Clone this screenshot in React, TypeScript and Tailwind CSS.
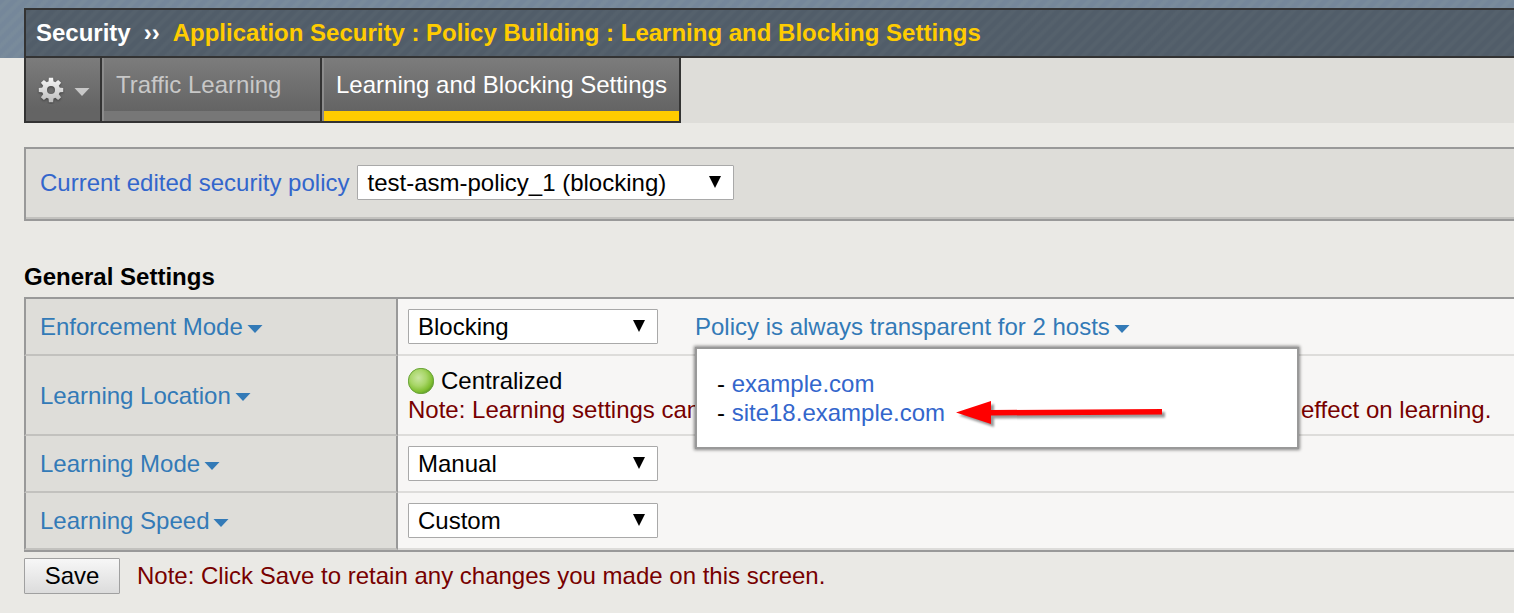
import React, { useState } from "react";

function Caret() {
  return (
    <svg className="mt-1 h-2 w-4 shrink-0" viewBox="0 0 16 8" aria-hidden="true">
      <path d="M0.5 0H15.5L8 8Z" fill="currentColor" />
    </svg>
  );
}

function SelectBox({ id, label, value, className }: { id: string; label?: string; value: string; className: string }) {
  return (
    <div className={`relative ${className}`}>
      <select
        id={id}
        aria-label={label}
        defaultValue={value}
        className="block h-[35px] w-full appearance-none rounded-[1px] border border-[#a9a9a9] bg-white pr-9 pl-[9px] text-2xl leading-8 text-black"
      >
        <option>{value}</option>
      </select>
      <svg className="pointer-events-none absolute top-[11px] right-[13px] h-3 w-3" viewBox="0 0 12 12" aria-hidden="true">
        <path d="M0 0H12L6 12Z" fill="#000" />
      </svg>
    </div>
  );
}

function Gear() {
  const angles = [0, 45, 90, 135, 180, 225, 270, 315];
  return (
    <svg className="h-7 w-7" viewBox="0 0 28 28" aria-hidden="true">
      <defs>
        <linearGradient id="gear" x1="0" y1="2" x2="0" y2="26" gradientUnits="userSpaceOnUse">
          <stop offset="0" stopColor="#f6f6f6" />
          <stop offset="1" stopColor="#bdbdbd" />
        </linearGradient>
        <mask id="gear-hole">
          <rect width="28" height="28" fill="#fff" />
          <circle cx="14" cy="14" r="4" fill="#000" />
        </mask>
      </defs>
      <g className="drop-shadow-[0_1px_1px_rgba(0,0,0,0.4)]">
        <g mask="url(#gear-hole)" fill="url(#gear)">
          <circle cx="14" cy="14" r="9" />
          {angles.map((a) => {
            const t = (a * Math.PI) / 180;
            const point = (x: number, y: number) =>
              `${14 + x * Math.cos(t) - y * Math.sin(t)},${14 + x * Math.sin(t) + y * Math.cos(t)}`;
            return (
              <polygon
                key={a}
                points={[point(-2.6, -7), point(-2.1, -12.2), point(2.1, -12.2), point(2.6, -7)].join(" ")}
              />
            );
          })}
        </g>
      </g>
    </svg>
  );
}

function Row({ label, children }: { label: string; children: React.ReactNode }) {
  return (
    <tr>
      <th
        scope="row"
        className="w-[374px] border-r-2 border-b-2 border-l-2 border-r-[#999] border-b-[#c2c1be] border-l-[#999] bg-[#deddd9] pl-3.5 text-left font-normal"
      >
        <button type="button" className="flex items-center gap-1 text-[#337ab7]">
          {label}
          <Caret />
        </button>
      </th>
      <td className="h-[57px] border-b-2 border-b-[#dddcda] bg-[#f7f6f5] pl-2.5">{children}</td>
    </tr>
  );
}

export default function App() {
  const [open, setOpen] = useState(true);
  return (
    <div className="min-h-screen overflow-x-hidden bg-[#eae9e5] font-['Liberation_Sans',Arial,sans-serif] text-2xl leading-[29px] text-black">
      <header>
        <div className="bg-[repeating-linear-gradient(135deg,#75879a_0px,#75879a_3px,#798b9b_5px,#798b9b_7px,#75879a_9px)] pt-2 pl-6">
          <div className="flex h-[50px] items-center border-2 border-r-0 border-[#333] bg-[repeating-linear-gradient(135deg,#515d69_0px,#515d69_3px,#55616c_5px,#55616c_7px,#515d69_9px)] pb-0.5 pl-2.5 font-bold whitespace-nowrap">
            <span className="text-white">Security</span>
            <span className="ml-[13px] text-white">››</span>
            <h1 className="ml-[13px] text-[#fc0]">Application Security : Policy Building : Learning and Blocking Settings</h1>
          </div>
        </div>
        <div className="pl-6">
          <nav className="flex h-[65px] bg-[#deddd9]">
            <div className="flex border-r-2 border-b-2 border-l-2 border-[#333] whitespace-nowrap">
              <button
                type="button"
                aria-label="Options"
                className="flex w-[74px] items-center bg-linear-to-b from-[#7c7c7c] to-[#646464] to-80% pl-[11px] text-[#c8c8c8]"
              >
                <Gear />
                <svg className="mt-1 ml-[9px] h-2 w-4" viewBox="0 0 16 8" aria-hidden="true">
                  <path d="M0.5 0H15.5L8 8Z" fill="currentColor" />
                </svg>
              </button>
              <a href="#traffic" className="flex w-[220px] border-l-2 border-[#333] text-[#c8c8c8]">
                <span className="w-0.5 bg-[#8c8c8c]" />
                <span className="flex-1 border-b-[10px] border-[#777] bg-linear-to-b from-[#7c7c7c] to-[#646464] pt-3 pl-3">
                  Traffic Learning
                </span>
              </a>
              <a href="#settings" aria-current="page" className="flex border-l-2 border-[#333] text-white">
                <span className="w-0.5 bg-[#8c8c8c]" />
                <span className="flex-1 border-b-[10px] border-[#fc0] bg-linear-to-b from-[#7c7c7c] to-[#646464] px-3 pt-3">
                  Learning and Blocking Settings
                </span>
              </a>
            </div>
          </nav>
        </div>
      </header>

      <main className="pt-6 pl-6">
        <section className="border-t-2 border-b-2 border-l-2 border-[#999]">
          <div className="flex items-center gap-2 border-b-2 border-[#c2c1be] bg-[#deddd9] pt-4 pb-[17px] pl-3.5">
            <label htmlFor="policy" className="whitespace-nowrap text-[#36c]">
              Current edited security policy
            </label>
            <SelectBox id="policy" value="test-asm-policy_1 (blocking)" className="w-[377px]" />
          </div>
        </section>

        <h2 className="mt-[41px] mb-1.5 font-bold">General Settings</h2>

        <table className="w-full border-separate border-spacing-0 border-t-2 border-b-2 border-[#999]">
          <tbody>
            <Row label="Enforcement Mode">
              <div className="flex items-center gap-[37px]">
                <SelectBox id="enforcement" label="Enforcement Mode" value="Blocking" className="w-[250px]" />
                <div className="relative">
                  <button
                    type="button"
                    aria-expanded={open}
                    onClick={() => setOpen(!open)}
                    className="flex items-center gap-1 whitespace-nowrap text-[#337ab7]"
                  >
                    Policy is always transparent for 2 hosts
                    <Caret />
                  </button>
                  {open && (
                    <div className="absolute top-[35px] left-0 z-10 w-[604px] border-2 border-[#999] bg-white p-5 shadow-[0_0_3px_1px_rgba(0,0,0,0.45)]">
                      <ul>
                        <li>
                          - <a href="#host-1" className="text-[#36c]">example.com</a>
                        </li>
                        <li className="flex items-center">
                          <span className="whitespace-pre">- </span>
                          <a href="#host-2" className="text-[#36c]">site18.example.com</a>
                          <svg className="ml-2.5 h-[29px] w-[216px] overflow-visible" viewBox="0 0 216 29" aria-hidden="true">
                            <path
                              className="drop-shadow-[3px_3px_1px_rgba(0,0,0,0.4)]"
                              d="M1 14.5L36 3V12L207 11V16.5L36 17.5V26Z"
                              fill="#f00"
                            />
                          </svg>
                        </li>
                      </ul>
                    </div>
                  )}
                </div>
              </div>
            </Row>
            <Row label="Learning Location">
              <div className="py-2.5">
                <div className="flex items-center gap-[7px]">
                  <svg className="h-[26px] w-[26px]" viewBox="0 0 26 26" aria-hidden="true">
                    <defs>
                      <radialGradient id="status" cx="0.4" cy="0.38" r="0.64">
                        <stop offset="0" stopColor="#c9e6a0" />
                        <stop offset="0.5" stopColor="#a8d668" />
                        <stop offset="0.85" stopColor="#7fbe30" />
                        <stop offset="1" stopColor="#629e2a" />
                      </radialGradient>
                    </defs>
                    <circle cx="13" cy="13" r="12.7" fill="url(#status)" stroke="#6aa43a" strokeWidth="1" />
                  </svg>
                  Centralized
                </div>
                <p className="flex whitespace-nowrap text-[#700]">
                  <span className="w-[893px] shrink-0">Note: Learning settings can</span>
                  <span>effect on learning.</span>
                </p>
              </div>
            </Row>
            <Row label="Learning Mode">
              <SelectBox id="mode" label="Learning Mode" value="Manual" className="w-[250px]" />
            </Row>
            <Row label="Learning Speed">
              <SelectBox id="speed" label="Learning Speed" value="Custom" className="w-[250px]" />
            </Row>
          </tbody>
        </table>

        <div className="mt-1.5 flex items-start gap-[17px] pb-5">
          <button
            type="button"
            className="h-9 w-24 rounded-[1px] border border-[#a0a0a0] bg-linear-to-b from-[#f7f7f7] to-[#dcdcdc] pb-0.5"
          >
            Save
          </button>
          <p className="pt-[3px] text-[#700]">Note: Click Save to retain any changes you made on this screen.</p>
        </div>
      </main>
    </div>
  );
}
